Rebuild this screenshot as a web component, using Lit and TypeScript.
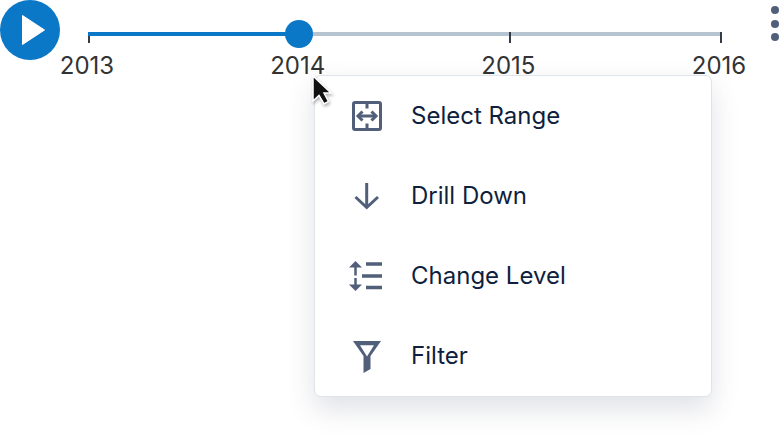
import { LitElement, html, css, svg } from "lit";
import { customElement } from "lit/decorators.js";

const ic = (c: unknown) => html`<svg class="ic" viewBox="0 0 36 36" width="36" height="36" fill="none" stroke="#525f7a" stroke-width="3">${c}</svg>`;

const items = [
  ["Select Range", ic(svg`<rect x="3.500" y="4.500" width="27" height="27" rx="1.500"/><path d="M17 4.500V10.500M17 25.500v6M8 18h18"/><path d="M12.500 13.500 8 18l4.500 4.500M21.500 13.500 26 18l-4.500 4.500"/>`)],
  ["Drill Down", ic(svg`<path d="M16.700 5v24M5.500 19l11.200 10.500L28 19"/>`)],
  ["Change Level", ic(svg`<path d="M16 6h16M12 18h20M16 29.500h16" stroke-width="3.500"/><path d="M5.500 8v9.500M5.500 20v7" stroke-width="2.500"/><path d="M-1 9.500 5.500 3l6.500 6.500zM-1 26.500h13L5.500 33z" fill="#525f7a" stroke="none"/>`)],
  ["Filter", ic(svg`<path fill-rule="evenodd" d="M3 3h28L20.500 18v13l-7 4V18zM10 7.300h14l-7 11.200z" fill="#525f7a" stroke="none"/>`)],
] as const;

@customElement("app-root")
export class AppRoot extends LitElement {
  static styles = css`
    :host { display: block; width: 779px; height: 439px; overflow: hidden; background: #fff; font-family: Inter, "Liberation Sans", sans-serif; position: relative; }
    .bar { display: flex; height: 75px; }
    .play { width: 60px; height: 60px; border-radius: 50%; background: #0a77c7; flex: none; display: flex; align-items: center; justify-content: center; }
    .slider { position: relative; flex: none; width: 634px; margin: 32px 0 0 28px; height: 4px; background: #b6c3d1; }
    .fill { position: absolute; left: 0; top: 0; height: 4px; width: 211px; background: #0a77c7; }
    .thumb { position: absolute; left: 197px; top: -12px; width: 28px; height: 28px; border-radius: 50%; background: #0a77c7; }
    .ticks { display: flex; justify-content: space-between; }
    .tick { width: 2px; height: 11px; background: #333c47; position: relative; }
    .tick span { position: absolute; top: 18px; left: -1px; transform: translateX(-50%); font-size: 24px; line-height: 32px; color: #333; }
    .more { margin-left: 49px; display: flex; flex-direction: column; gap: 5.500px; padding-top: 6px; }
    .more i { width: 8px; height: 8px; border-radius: 50%; background: #525f7a; display: block; }
    .menu { position: absolute; left: 314px; top: 75px; width: 398px; height: 322px; box-sizing: border-box; background: #fff; border: 1px solid #dfe3ea; border-radius: 7px; box-shadow: 0 12px 28px rgba(60,70,100,.16); }
    .row { height: 80px; display: flex; align-items: center; padding-left: 35px; gap: 25px; font-size: 24px; color: #0f1f3d; }
    .row span { padding-bottom: 2px; }
    .ic { flex: none; overflow: visible; }
    .cursor { position: absolute; left: 309px; top: 72px; filter: drop-shadow(1px 2px 1.500px rgba(0,0,0,.3)); }
  `;
  render() {
    return html`
      <div class="bar">
        <div class="play"><svg width="30" height="32" viewBox="0 0 30 32"><path d="M7.500 1.500 29.500 16 7.500 30.500z" fill="#fff" stroke="#fff" stroke-linejoin="round"/></svg></div>
        <div class="slider">
          <div class="ticks">${["2013","2014","2015","2016"].map(y => html`<div class="tick"><span>${y}</span></div>`)}</div>
          <div class="fill"></div>
          <div class="thumb"></div>
        </div>
        <div class="more"><i></i><i></i><i></i></div>
      </div>
      <div class="menu">
        ${items.map(([t, i]) => html`<div class="row">${i}<span>${t}</span></div>`)}
      </div>
      <svg class="cursor" width="28" height="38" viewBox="0 0 28 38"><path d="M4 4V29L10 23.500 15 32 19.500 29.500 15 21H22Z" fill="#111" stroke="#fff" stroke-width="1.500"/></svg>
    `;
  }
}
